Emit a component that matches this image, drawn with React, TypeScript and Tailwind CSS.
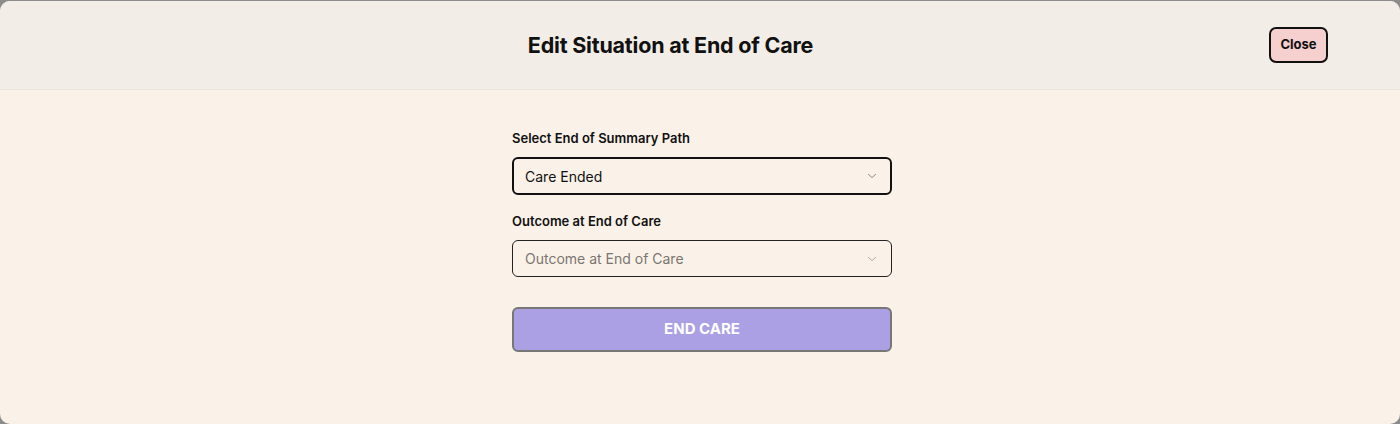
import { ChevronDown } from 'lucide-react';

export default function App() {
  return (
    <div className="h-[424px] w-[1400px] bg-[#8c8c8c] pt-px font-['Inter',sans-serif] text-[#111]">
      <div className="flex h-[423px] flex-col overflow-hidden rounded-[10px] bg-[#faf2e9]">
        {/* Header */}
        <div className="flex h-[89px] shrink-0 items-center border-b border-[#ebe5dd] bg-[#f2ede6] px-[72px]">
          <h1 className="flex-1 text-center text-[21.5px] font-bold tracking-[-0.2px]">
            Edit Situation at End of Care
          </h1>
          <button
            type="button"
            className="h-[36px] w-[59px] rounded-[7px] border-2 border-[#111] bg-[#f6cfcf] text-[13px] font-bold"
          >
            Close
          </button>
        </div>

        {/* Body */}
        <div className="flex flex-1 justify-center pl-[4px] pt-[39px]">
          <div className="flex w-[380px] flex-col">
            <label className="text-[13px] font-semibold leading-[18px]">Select End of Summary Path</label>
            <div className="mt-[10px] flex h-[38px] items-center justify-between rounded-[6px] border-2 border-[#111] px-[11px]">
              <span className="text-[14px]">Care Ended</span>
              <ChevronDown className="h-[14px] w-[14px] text-[#777]" strokeWidth={1.5} />
            </div>

            <label className="mt-[17px] text-[13px] font-semibold leading-[18px]">Outcome at End of Care</label>
            <div className="mt-[10px] flex h-[37px] items-center justify-between rounded-[6px] border border-[#222] px-[12px]">
              <span className="text-[14px] text-[#7a7570]">Outcome at End of Care</span>
              <ChevronDown className="h-[14px] w-[14px] text-[#999]" strokeWidth={1.5} />
            </div>

            <button
              type="button"
              className="mt-[30px] h-[45px] rounded-[6px] border-2 border-[#777] bg-[#aca0e4] text-[15px] font-bold text-white"
            >
              END CARE
            </button>
          </div>
        </div>
      </div>
    </div>
  );
}
